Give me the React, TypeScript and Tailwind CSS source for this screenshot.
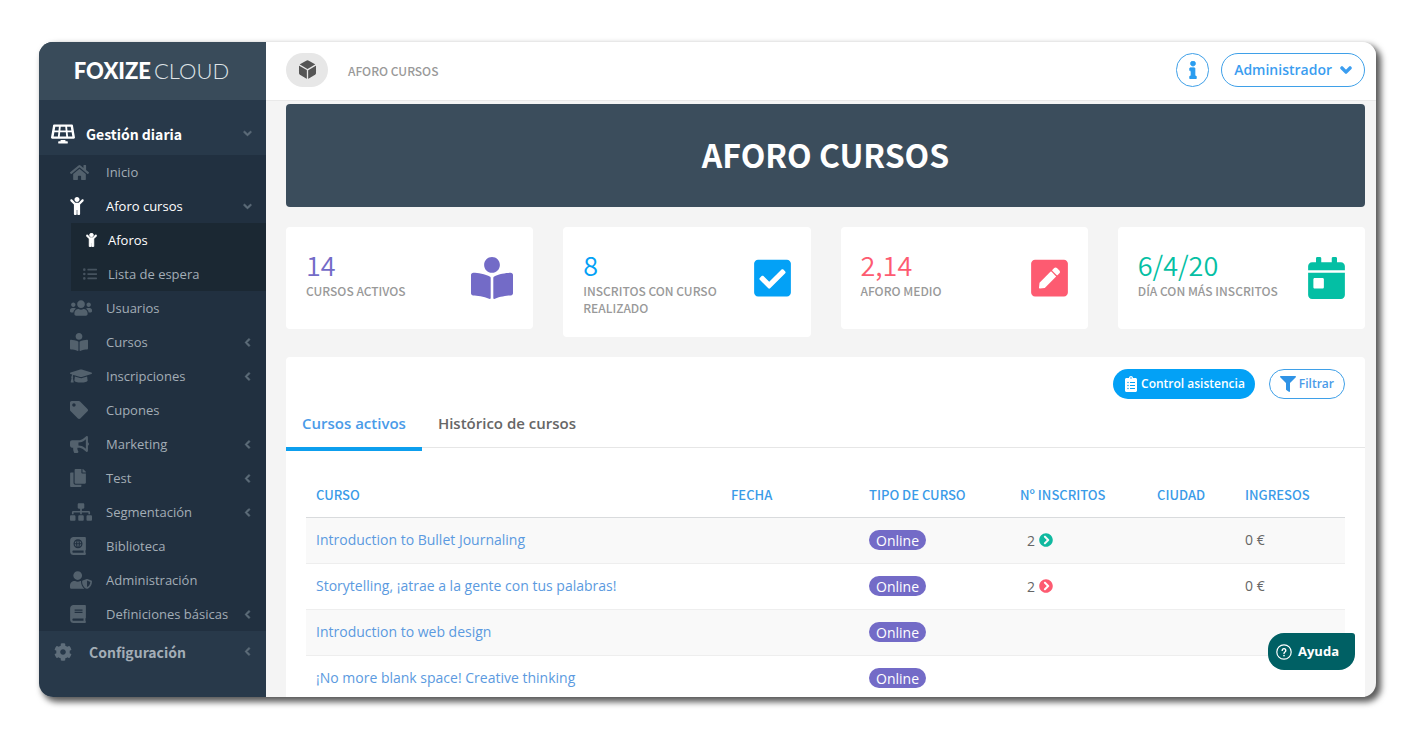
import type { ReactNode } from "react";
import type { IconType } from "react-icons";
import {
  FaAtlas,
  FaBook,
  FaBookReader,
  FaBullhorn,
  FaCalendarDay,
  FaCheckSquare,
  FaChevronCircleRight,
  FaChevronDown,
  FaChevronLeft,
  FaChild,
  FaClipboardList,
  FaCog,
  FaCopy,
  FaFilter,
  FaGraduationCap,
  FaHome,
  FaInfo,
  FaListUl,
  FaPenSquare,
  FaSitemap,
  FaSolarPanel,
  FaTag,
  FaUserShield,
  FaUsers,
} from "react-icons/fa";
import { IoCube } from "react-icons/io5";

type Item = { label: string; icon: IconType; size?: string; more?: boolean };

const items: Item[] = [
  { label: "Usuarios", icon: FaUsers, size: "size-[22px]" },
  { label: "Cursos", icon: FaBookReader, more: true },
  { label: "Inscripciones", icon: FaGraduationCap, size: "size-[22px]", more: true },
  { label: "Cupones", icon: FaTag },
  { label: "Marketing", icon: FaBullhorn, size: "size-[19px]", more: true },
  { label: "Test", icon: FaCopy, size: "h-[18px] w-4", more: true },
  { label: "Segmentación", icon: FaSitemap, size: "size-[22px]", more: true },
  { label: "Biblioteca", icon: FaAtlas, size: "h-[18px] w-4" },
  { label: "Administración", icon: FaUserShield, size: "size-[22px]" },
  { label: "Definiciones básicas", icon: FaBook, size: "h-[18px] w-4", more: true },
];

const stats: { value: string; label: string; icon: IconType; width: string; color: string }[] = [
  { value: "14", label: "CURSOS ACTIVOS", icon: FaBookReader, width: "w-[42px]", color: "text-[#736bc7]" },
  { value: "8", label: "INSCRITOS CON CURSO REALIZADO", icon: FaCheckSquare, width: "w-[37px]", color: "text-[#03a1f6]" },
  { value: "2,14", label: "AFORO MEDIO", icon: FaPenSquare, width: "w-[37px]", color: "text-[#fd5b71]" },
  { value: "6/4/20", label: "DÍA CON MÁS INSCRITOS", icon: FaCalendarDay, width: "w-[37px]", color: "text-[#04bfa4]" },
];

const rows: { name: string; count?: number; color?: string; income?: string }[] = [
  { name: "Introduction to Bullet Journaling", count: 2, color: "text-[#10b9a0]", income: "0 €" },
  { name: "Storytelling, ¡atrae a la gente con tus palabras!", count: 2, color: "text-[#fd5b71]", income: "0 €" },
  { name: "Introduction to web design" },
  { name: "¡No more blank space! Creative thinking" },
];

const Collapsed = () => <FaChevronLeft strokeWidth={50} className="mb-0.5 size-[9px] shrink-0 text-[#5f6e7b]" />;
const Expanded = () => <FaChevronDown strokeWidth={50} className="mb-0.5 size-[9px] shrink-0 text-[#5f6e7b]" />;

function MenuLink({ icon: Icon, label, size = "size-[18px]", more, active, trailing }: Item & { active?: boolean; trailing?: ReactNode }) {
  return (
    <a
      href="#"
      className={`flex h-[34px] items-center pt-0.5 pr-[14px] pl-[31px] text-[13px] ${active ? "text-white" : "text-[#a3adb6]"}`}
    >
      <span className={`mb-0.5 flex w-9 shrink-0 ${active ? "text-white" : "text-[#53616d]"}`}>
        <Icon className={size} />
      </span>
      <span className="grow whitespace-nowrap">{label}</span>
      {more && <Collapsed />}
      {trailing}
    </a>
  );
}

function Sidebar() {
  return (
    <aside className="flex w-[227px] shrink-0 flex-col bg-[#28394a]">
      <div className="flex h-[58px] shrink-0 items-center justify-center gap-[3px] bg-[#394b5a] pr-0.5 pb-0.5 font-[Lato,sans-serif] text-[22px] text-white">
        <span className="font-black">FOXIZE</span>
        <span className="font-light text-[#dfe4e8]">CLOUD</span>
      </div>
      <nav>
        <a
          href="#"
          className="flex h-[55px] items-center pt-[13px] pr-[14px] pl-3 font-['Noto_Sans_CJK_SC',sans-serif] text-[14px] font-bold text-white"
        >
          <FaSolarPanel className="mr-[11px] size-6" />
          <span className="grow">Gestión diaria</span>
          <Expanded />
        </a>
        <div className="bg-[#213040]">
          <MenuLink icon={FaHome} label="Inicio" size="size-[19px]" />
          <MenuLink icon={FaChild} label="Aforo cursos" size="h-[18px] w-[14px]" active trailing={<Expanded />} />
          <div className="ml-8 bg-[#1b2833] text-[13px]">
            <a href="#" className="flex h-[34px] items-center pt-0.5 pl-[15px] text-white">
              <span className="mb-0.5 w-[22px]">
                <FaChild strokeWidth={20} className="h-[14px] w-[11px]" />
              </span>
              Aforos
            </a>
            <a href="#" className="flex h-[34px] items-center pt-0.5 pl-3 text-[#a3adb6]">
              <span className="mb-0.5 w-[25px] text-[#46535f]">
                <FaListUl className="size-[14px]" />
              </span>
              Lista de espera
            </a>
          </div>
          {items.map((item) => (
            <MenuLink key={item.label} {...item} />
          ))}
        </div>
        <a
          href="#"
          className="flex h-[42px] items-center pr-[14px] pl-[15px] font-['Noto_Sans_CJK_SC',sans-serif] text-[14px] font-bold text-[#a3adb6]"
        >
          <FaCog className="mr-[17px] size-[18px] text-[#5f6e7b]" />
          <span className="grow">Configuración</span>
          <Collapsed />
        </a>
      </nav>
    </aside>
  );
}

function Header() {
  return (
    <header className="flex h-[58px] shrink-0 items-center bg-white pr-[11px] pb-0.5 pl-5">
      <button aria-label="Menú" className="flex h-[34px] w-[42px] items-center justify-center rounded-full bg-[#e7e7e7] pb-0.5 text-[#555]">
        <IoCube className="size-[21px]" />
      </button>
      <span className="ml-5 grow pt-0.5 font-['Noto_Sans_CJK_SC',sans-serif] text-[12px] leading-4 font-medium text-[#999]">
        AFORO CURSOS
      </span>
      <button
        aria-label="Información"
        className="mr-3 flex h-[34px] w-[33px] items-center justify-center rounded-full border border-[#3fa0e8] text-[#2a9df0]"
      >
        <FaInfo strokeWidth={20} className="size-[18px]" />
      </button>
      <button className="flex h-[34px] items-center gap-2 rounded-full border border-[#3fa0e8] px-3 pb-0.5 text-[14px] font-semibold text-[#3a9df0]">
        Administrador
        <FaChevronDown strokeWidth={60} className="mt-0.5 size-3" />
      </button>
    </header>
  );
}

function Stats() {
  return (
    <section className="mt-5 grid grid-cols-4 items-start gap-[30px]">
      {stats.map(({ value, label, icon: Icon, width, color }) => (
        <div key={label} className="flex min-h-[102px] justify-between rounded bg-white px-5 pt-[22px] pb-[21px]">
          <div className="grow font-['Noto_Sans_CJK_SC',sans-serif]">
            <div className={`text-[27px] leading-8 font-[350] ${color}`}>{value}</div>
            <div className="pt-px text-[12px] leading-[17px] font-medium text-[#999]">{label}</div>
          </div>
          <Icon className={`mt-2 h-[42px] shrink-0 ${width} ${color}`} />
        </div>
      ))}
    </section>
  );
}

function Courses() {
  return (
    <section className="mt-5 rounded-t bg-white">
      <div className="flex justify-end gap-[14px] px-5 pt-3">
        <button className="flex h-[30px] items-center gap-0.5 rounded-full bg-[#03a1f6] px-[10px] text-[12px] font-semibold text-white">
          <FaClipboardList className="size-4" />
          Control asistencia
        </button>
        <button className="flex h-[30px] items-center gap-[3px] rounded-full border border-[#3fa0e8] px-[10px] text-[12px] font-semibold text-[#4a9be8]">
          <FaFilter className="size-4 text-[#2f93e6]" />
          Filtrar
        </button>
      </div>
      <div className="flex border-b border-[#e6e6e6] text-[15px] font-semibold text-[#666]">
        <button className="-mb-1 h-[52px] border-b-4 border-[#0d9fee] px-4 text-[#4a9be8]">Cursos activos</button>
        <button className="h-12 px-4">Histórico de cursos</button>
      </div>
      <div className="px-5 pt-[25px]">
        <table className="w-full table-fixed text-left text-[14px] text-[#666]">
          <colgroup>
            <col />
            <col className="w-[138px]" />
            <col className="w-[151px]" />
            <col className="w-[137px]" />
            <col className="w-[88px]" />
            <col className="w-[110px]" />
          </colgroup>
          <thead>
            <tr className="h-11 border-b border-[#d9dbdd] font-['Noto_Sans_CJK_SC',sans-serif] text-[13px] text-[#3a9be8]">
              {["CURSO", "FECHA", "TIPO DE CURSO", "Nº INSCRITOS", "CIUDAD", "INGRESOS"].map((title) => (
                <th key={title} className="px-[10px] font-medium whitespace-nowrap">
                  {title}
                </th>
              ))}
            </tr>
          </thead>
          <tbody>
            {rows.map((row) => (
              <tr key={row.name} className="h-[46px] border-b border-[#eee] odd:bg-[#f9f9f9]">
                <td className="px-[10px] pb-0.5">
                  <a href="#" className="text-[#5b9ae0]">
                    {row.name}
                  </a>
                </td>
                <td />
                <td className="px-[10px]">
                  <span className="flex h-5 w-[57px] items-center justify-center rounded-full bg-[#736bc7] text-white">Online</span>
                </td>
                <td className="pl-[17px]">
                  {row.count && (
                    <span className="flex items-center gap-1">
                      {row.count}
                      <FaChevronCircleRight className={`size-[14px] ${row.color}`} />
                    </span>
                  )}
                </td>
                <td />
                <td className="px-[10px] pb-0.5">{row.income}</td>
              </tr>
            ))}
          </tbody>
        </table>
      </div>
    </section>
  );
}

export default function App() {
  return (
    <div className="h-screen bg-white px-[39px] pt-[42px] pb-11 font-['Open_Sans',sans-serif]">
      <div className="relative flex h-full overflow-hidden rounded-[14px] bg-[#f4f4f4] shadow-[4px_4px_6px_1px_rgba(0,0,0,0.65)]">
        <Sidebar />
        <div className="flex min-w-0 grow flex-col">
          <Header />
          <main className="min-h-0 grow overflow-hidden border-t border-[#e9e9e9] pt-[3px] pr-[11px] pl-5">
            <h1 className="flex h-[103px] items-center justify-center rounded bg-[#3b4d5c] pb-1 font-['Noto_Sans_CJK_SC',sans-serif] text-[32px] font-bold text-white">
              AFORO CURSOS
            </h1>
            <Stats />
            <Courses />
          </main>
        </div>
        <button className="absolute right-[21px] bottom-[27px] flex h-[37px] items-center gap-1.5 rounded-[16px] rounded-tr-[3px] bg-[#006064] pr-4 pl-2 text-[13px] font-bold text-white">
          <svg viewBox="0 0 16 16" className="size-4" fill="none" stroke="currentColor" strokeLinecap="round">
            <circle cx="8" cy="8" r="7.2" strokeWidth="1.2" />
            <path d="M6.2 6.4a1.8 1.8 0 1 1 2.7 1.6c-.6.4-.9.7-.9 1.4" strokeWidth="1.4" />
            <path d="M8 11.6v.1" strokeWidth="1.6" />
          </svg>
          Ayuda
        </button>
      </div>
    </div>
  );
}
